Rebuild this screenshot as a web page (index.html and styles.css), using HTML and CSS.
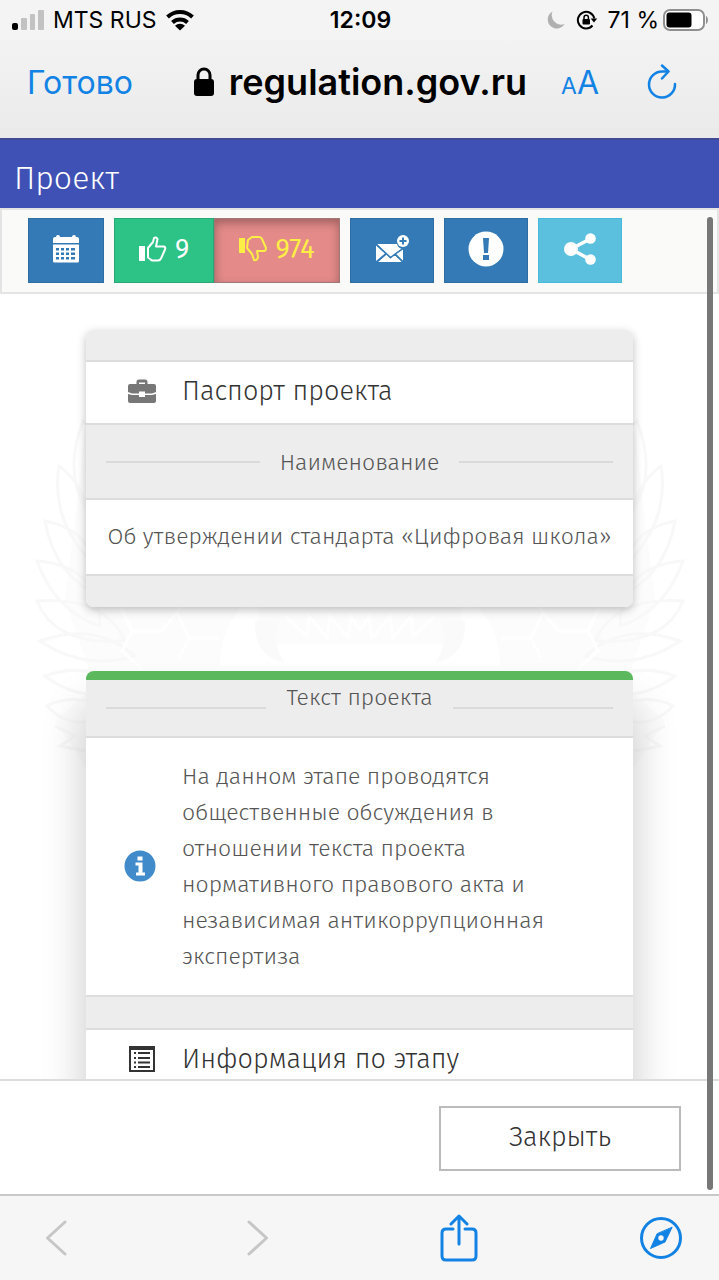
FILE: index.html
```html
<!DOCTYPE html>
<html lang="ru">
<head>
  <meta charset="UTF-8" />
  <meta name="viewport" content="width=device-width, initial-scale=1.0" />
  <title>Проект</title>
  <link rel="stylesheet" href="styles.css">
</head>
<body>
  <div class="status-bar">
    <div class="status-left">
      <svg width="33" height="22" viewBox="0 0 33 22">
        <rect x="0" y="14" width="6" height="7" rx="2" fill="#000" />
        <g fill="#c2c2c2">
          <rect x="9" y="9" width="6" height="12" rx="1" />
          <rect x="18" y="5" width="5" height="16" rx="1" />
          <rect x="26" y="1" width="6" height="20" rx="1" />
        </g>
      </svg>
      <span>MTS RUS</span>
      <svg width="30" height="22" viewBox="0 0 30 22">
        <g fill="none" stroke="#000" stroke-width="4">
          <path d="M2.500 8a18 18 0 0 1 25 0" />
          <path d="M7.500 13.500a11 11 0 0 1 15 0" />
        </g>
        <path d="M15 21.500l-5-4.700a7.400 7.400 0 0 1 10 0z" />
      </svg>
    </div>
    <div class="clock">12:09</div>
    <div class="status-right">
      <svg width="20" height="20" viewBox="0 0 20 20">
        <path d="M6.500 1.500a9 9 0 1 0 12 12.500A9.500 9.500 0 0 1 6.500 1.500z" fill="#b0b0b0" />
      </svg>
      <svg width="22" height="20" viewBox="0 0 22 20">
        <path d="M16.500 15.500A8.300 8.300 0 1 1 18.300 8.500" fill="none" stroke="#000" stroke-width="2" />
        <path d="M14.700 8.500h6.500l-3.200 4z" />
        <rect x="6.500" y="9" width="7.500" height="5.500" rx="1" />
        <path d="M8 9V7.500a2.200 2.200 0 0 1 4.400 0V9" fill="none" stroke="#000" stroke-width="1.500" />
      </svg>
      <span>71 %</span>
      <svg class="battery" width="46" height="22" viewBox="0 0 46 22">
        <rect x="1" y="1" width="40" height="20" rx="6" fill="#fff" stroke="#909090" stroke-width="2" />
        <rect x="3.500" y="3.500" width="25" height="15" rx="3" />
        <path d="M43.500 7.500q2 3.500 0 7z" fill="#909090" stroke="#909090" />
      </svg>
    </div>
  </div>

  <div class="browser-bar">
    <button class="done">Готово</button>
    <div class="address">
      <svg width="22" height="30" viewBox="0 0 22 30">
        <rect x="1" y="12" width="20" height="17" rx="3" />
        <path d="M5 13V8a6 6 0 0 1 12 0v5" fill="none" stroke="#000" stroke-width="3" />
      </svg>
      <span>regulation.gov.ru</span>
    </div>
    <button class="text-size" aria-label="Размер текста"><span class="small-a">A</span>A</button>
    <button class="reload" aria-label="Обновить">
      <svg width="30" height="36" viewBox="0 0 30 36" fill="none" stroke="#1283e4" stroke-width="2.500" stroke-linecap="round" stroke-linejoin="round">
        <path d="M28 20a13 13 0 1 1-13-12.500h6" />
        <path d="M15 1.500l6.500 6-6.500 7" />
      </svg>
    </button>
  </div>

  <main class="page">
    <header class="page-header">
      <h1>Проект</h1>
    </header>

    <div class="toolbar">
      <button class="btn btn-calendar" aria-label="Календарь">
        <svg width="26" height="28" viewBox="0 0 26 28" fill="#fff">
          <path d="M0 4q0-2 2-2h1q0-2 2-2t2 2h12q0-2 2-2t2 2h1q2 0 2 2v4H0z" />
          <path fill-rule="evenodd" d="M0 9.500h26V26q0 1.500-1.500 1.500h-23Q0 27.500 0 26zM3 13v2.500h3V13zM8 13v2.500h3V13zM13 13v2.500h3V13zM18 13v2.500h4V13zM3 17.500V20h3v-2.500zM8 17.500V20h3v-2.500zM13 17.500V20h3v-2.500zM18 17.500V20h4v-2.500zM3 22v2.500h3V22zM8 22v2.500h3V22zM13 22v2.500h3V22zM18 22v2.500h4V22z" />
        </svg>
      </button>
      <div class="votes">
        <button class="btn btn-like" aria-label="За: 9">
          <svg width="28" height="26" viewBox="0 0 28 26">
            <rect x="0" y="10" width="6" height="15" fill="currentColor" />
            <path d="M9 12l5-6 1-4q2-1.500 3.500 1l-1.500 7.500h8q2 1 1 3l-4 9q-1 2-3 2h-6l-4-3z" fill="none" stroke="currentColor" stroke-width="2" stroke-linejoin="round" />
          </svg>
          <span>9</span>
        </button>
        <button class="btn btn-dislike" aria-label="Против: 974">
          <svg width="28" height="26" viewBox="0 0 28 26">
            <rect x="0" y="2" width="6" height="15" fill="currentColor" />
            <path d="M9 4l4-3h7q2 0 3 2l4 9q0 3-2 3h-7l1 6q-1 4-4 3l-2-6-5-6z" fill="none" stroke="currentColor" stroke-width="2" stroke-linejoin="round" />
          </svg>
          <span>974</span>
        </button>
      </div>
      <button class="btn" aria-label="Подписаться">
        <svg width="34" height="28" viewBox="0 0 34 28" fill="#fff">
          <path d="M2 9h20q1 4 5 5l-11.500 9z" />
          <path d="M1 10.500l9 8L1 26zM28 14.500V26l-7-7zM2.500 27l9-7.500 4 4 4-4 7.500 7.500z" />
          <path d="M1.500 9.500l14 13L27 14M2 27l9-8M28 27l-8-8" fill="none" stroke="#337ab7" stroke-width="1.500" />
          <circle cx="28" cy="6" r="6" />
          <path d="M28 2.500v7M24.500 6h7" stroke="#337ab7" stroke-width="2" />
        </svg>
      </button>
      <button class="btn" aria-label="Сообщить">
        <svg width="36" height="36" viewBox="0 0 36 36">
          <circle cx="18" cy="18" r="17.500" fill="#fff" />
          <path d="M15 7h6l-1 15h-4zM15 24h6v5h-6z" fill="#337ab7" />
        </svg>
      </button>
      <button class="btn btn-share" aria-label="Поделиться">
        <svg width="32" height="32" viewBox="0 0 32 32" fill="#fff">
          <path d="M27 5.500L7 16l20 11" fill="none" stroke="#fff" stroke-width="3.500" />
          <circle cx="7" cy="16" r="7" />
          <circle cx="26.500" cy="5.500" r="5.300" />
          <circle cx="26.500" cy="26.500" r="5.300" />
        </svg>
      </button>
    </div>

    <div class="content">
      <!-- emblem behind the cards -->
      <svg class="emblem" width="650" height="400" viewBox="0 0 650 400">
        <defs>
          <g id="wing">
            <path d="M50 30L40 120 30 200 60 285 20 320 50 365 180 370 325 350V200H190z" fill="#fcfcfc" stroke="none" />
            <path d="M60 120Q25 80 48 20Q80 45 60 120M60 165Q15 120 24 65Q60 90 60 165M65 195Q20 175 10 120Q65 130 65 195M65 225Q20 210 2 160Q65 165 65 225M90 240Q20 245 2 200Q70 195 90 240M100 255Q50 270 5 240Q60 220 100 255M90 285Q50 305 10 275Q50 260 90 285M80 310Q40 335 12 305Q40 290 80 310" />
            <path d="M20 325l20 10-15 10 25 5" />
            <path d="M85 205l12 25-10 20 20 18M97 230h30l20-25M142 212l12 25-10 20M154 237h30" stroke="#fff" stroke-width="3" />
            <path d="M185 265q0-35 22-60h18q-5 22 10 38h90v22z" fill="#fff" stroke="none" />
            <path d="M220 220q-2 35 30 42-15-20-5-42z" fill="#fafafa" stroke="none" />
            <path d="M250 215l22 20 2-20 18 22 3-22 18 22 3-22 9 15" stroke="#fff" />
          </g>
        </defs>
        <g fill="none" stroke="#f8f8f8" stroke-width="3">
          <use href="#wing" />
          <use href="#wing" transform="translate(650 0) scale(-1 1)" />
        </g>
      </svg>

      <section class="card">
        <div class="strip"></div>
        <div class="row title-row">
          <svg width="28" height="24" viewBox="0 0 28 24" fill="#777">
            <path d="M8.500 6V3q0-2.500 2.500-2.500h6q2.500 0 2.500 2.500v3h-2.500V3.500h-6V6z" />
            <path d="M2 5h24q2 0 2 2v6l-4 1.500h-7v-2h-6v2H4L0 13V7q0-2 2-2z" />
            <path d="M0 15l4 1h7v2h6v-2h7l4-1v7q0 2-2 2H2q-2 0-2-2z" />
          </svg>
          <h2>Паспорт проекта</h2>
        </div>
        <div class="row divider-row"><span>Наименование</span></div>
        <div class="row name-row">Об утверждении стандарта «Цифровая школа»</div>
        <div class="strip"></div>
      </section>

      <section class="card card-stage">
        <div class="row divider-row stage-row"><span>Текст проекта</span></div>
        <div class="row info-row">
          <svg width="32" height="32" viewBox="0 0 32 32">
            <circle cx="16" cy="16" r="15.500" fill="#428bca" />
            <path d="M13.500 6.500h5v4h-5zM11.500 12.500h7v10h2.500v3h-9v-3h2.500v-7h-3z" fill="#fff" />
          </svg>
          <p>На данном этапе проводятся общественные обсуждения в отношении текста проекта нормативного правового акта и независимая антикоррупционная экспертиза</p>
        </div>
        <div class="strip"></div>
        <div class="row title-row">
          <svg width="28" height="28" viewBox="0 0 28 28" fill="#333">
            <path fill-rule="evenodd" d="M1 1h26v26H1zM3 5v20h22V5z" />
            <path d="M6 7h2v2H6zM10 7h12v2H10zM6 12h2v2H6zM10 12h12v2H10zM6 16.500h2v2H6zM10 16.500h12v2H10zM6 21h2v2H6zM10 21h12v2H10z" />
          </svg>
          <h2>Информация по этапу</h2>
        </div>
      </section>
    </div>

    <footer class="page-footer">
      <button class="close">Закрыть</button>
    </footer>
    <div class="scroll-thumb"></div>
  </main>

  <nav class="bottom-bar">
    <button aria-label="Назад" disabled>
      <svg width="22" height="38" viewBox="0 0 22 38"><path d="M20 3L2.500 19 20 35" /></svg>
    </button>
    <button aria-label="Вперёд" disabled>
      <svg width="22" height="38" viewBox="0 0 22 38"><path d="M2 3l17.500 16L2 35" /></svg>
    </button>
    <button aria-label="Поделиться страницей">
      <svg width="38" height="48" viewBox="0 0 38 48"><path d="M13 15H6q-4 0-4 4v23q0 4 4 4h26q4 0 4-4V19q0-4-4-4h-7M19 30V3M11 10l8-8 8 8" /></svg>
    </button>
    <button aria-label="Открыть в Safari">
      <svg width="42" height="42" viewBox="0 0 42 42">
        <circle cx="21" cy="21" r="19.500" />
        <path d="M32 10.500L25 25 10.500 31.500 17 17z" fill="#1283e4" stroke-width="1" />
        <circle cx="21" cy="21" r="2.700" fill="#f6f6f6" stroke="none" />
      </svg>
    </button>
  </nav>
</body>
</html>
```

FILE: styles.css
```css
* {
  box-sizing: border-box;
}
body {
  margin: 0;
  height: 100vh;
  display: flex;
  flex-direction: column;
  font-family: "Fira Sans", "Noto Sans", sans-serif;
  font-weight: 300;
  color: #555;
  background: #fff;
}
button {
  font: inherit;
  border: none;
  background: none;
  padding: 0;
}
svg {
  display: block;
  flex: none;
}
h1, h2, p {
  margin: 0;
  font-weight: 300;
}

/* phone status bar and browser bar */
.status-bar {
  display: grid;
  grid-template-columns: 1fr auto 1fr;
  align-items: center;
  height: 40px;
  padding: 0 10px 0 12px;
  background: #f4f4f4;
  font: 400 23px "Inter", sans-serif;
  color: #000;
}
.status-left, .status-right {
  display: flex;
  align-items: center;
  gap: 8px;
}
.status-right {
  justify-content: flex-end;
  gap: 10px;
}
.battery {
  margin-left: -6px;
}
.clock {
  font-weight: 600;
}
.browser-bar {
  display: flex;
  align-items: center;
  height: 98px;
  padding: 0 42px 14px 27px;
  background: linear-gradient(#f3f3f3, #eaeaea);
  font: 400 32px "Inter", sans-serif;
}
.done, .text-size {
  color: #1283e4;
}
.address {
  display: flex;
  align-items: center;
  gap: 14px;
  margin: 0 34px 0 auto;
  font-size: 36px;
  font-weight: 600;
  color: #000;
}
.text-size {
  margin-right: 48px;
}
.small-a {
  font-size: 23px;
}

/* site page */
.page {
  position: relative;
  flex: 1;
  min-height: 0;
  display: flex;
  flex-direction: column;
}
.page-header {
  height: 70px;
  padding: 18px 14px 0;
  border-top: 2px solid #414a94;
  background: #3f51b5;
}
.page-header h1 {
  font-size: 32px;
  line-height: 40px;
  color: #fff;
}
.toolbar {
  display: flex;
  gap: 10px;
  padding: 8px 26px 9px;
  border: 2px solid #e4e4e4;
  background: #fafaf8;
}
.btn {
  display: flex;
  align-items: center;
  justify-content: center;
  gap: 8px;
  width: 84px;
  height: 65px;
  padding-bottom: 4px;
  border: 1px solid #2e6da4;
  background: #337ab7;
  color: #fff;
  font-size: 27px;
  font-weight: 400;
}
.btn-calendar {
  width: 76px;
}
.votes {
  display: flex;
}
.btn-like {
  width: 100px;
  border-color: #29a673;
  background: #2dc387;
}
.btn-dislike {
  width: 126px;
  border-color: #a17878;
  background: #e48b89;
  color: #ffee45;
  box-shadow: inset 0 4px 10px rgba(0, 0, 0, 0.3);
}
.btn-share {
  border-color: #46b8da;
  background: #5bc0de;
}
.content {
  position: relative;
  flex: 1;
  min-height: 0;
  overflow: hidden;
  padding: 36px 86px 0;
}
.emblem {
  position: absolute;
  top: 107px;
  left: 50%;
  margin-left: -325px;
}
.card {
  position: relative;
  margin-bottom: 64px;
  border-radius: 8px;
  overflow: hidden;
  background: #fff;
  box-shadow: 0 3px 10px rgba(0, 0, 0, 0.25);
}
.strip {
  height: 30px;
  background: #ededed;
}
.row {
  border-top: 2px solid #ddd;
}
.row + .strip {
  height: 33px;
  border-top: 2px solid #ddd;
}
.title-row {
  display: flex;
  align-items: center;
  gap: 26px;
  height: 63px;
  padding: 0 0 4px 42px;
}
.title-row h2 {
  font-size: 27px;
  color: #333;
}
.divider-row {
  display: flex;
  align-items: center;
  gap: 20px;
  height: 75px;
  padding: 0 20px;
  background: #ededed;
  font-size: 23px;
}
.divider-row::before, .divider-row::after {
  content: "";
  flex: 1;
  height: 2px;
  background: #dadada;
}
.name-row {
  padding: 18px 0 20px;
  font-size: 23px;
  line-height: 36px;
  text-align: center;
}
.card-stage {
  box-shadow: 0 36px 44px rgba(0, 0, 0, 0.22);
}
.stage-row {
  height: 65px;
  border-top: 9px solid #5cb85c;
}
.stage-row span {
  padding-bottom: 22px;
}
.info-row {
  display: flex;
  align-items: center;
  gap: 26px;
  padding: 20px 40px 21px 38px;
  font-size: 23px;
  line-height: 36px;
}
.page-footer {
  display: flex;
  justify-content: flex-end;
  padding: 25px 38px 23px;
  border-top: 2px solid #ddd;
  background: #fff;
}
.close {
  width: 242px;
  height: 65px;
  padding-bottom: 3px;
  border: 2px solid #bbb;
  background: #fff;
  color: #333;
  font-size: 27px;
}
.scroll-thumb {
  position: absolute;
  top: 79px;
  right: 6px;
  bottom: 4px;
  width: 6px;
  border-radius: 3px;
  background: #777;
}

.bottom-bar {
  display: flex;
  align-items: center;
  justify-content: space-between;
  height: 86px;
  padding: 0 37px 0 35px;
  border-top: 2px solid #c8c8c8;
  background: #f6f6f6;
}
.bottom-bar button {
  display: flex;
  justify-content: center;
  width: 42px;
}
.bottom-bar svg {
  fill: none;
  stroke: #1283e4;
  stroke-width: 3;
  stroke-linecap: round;
  stroke-linejoin: round;
}
.bottom-bar button:disabled svg {
  stroke: #c6c6c6;
}
```
